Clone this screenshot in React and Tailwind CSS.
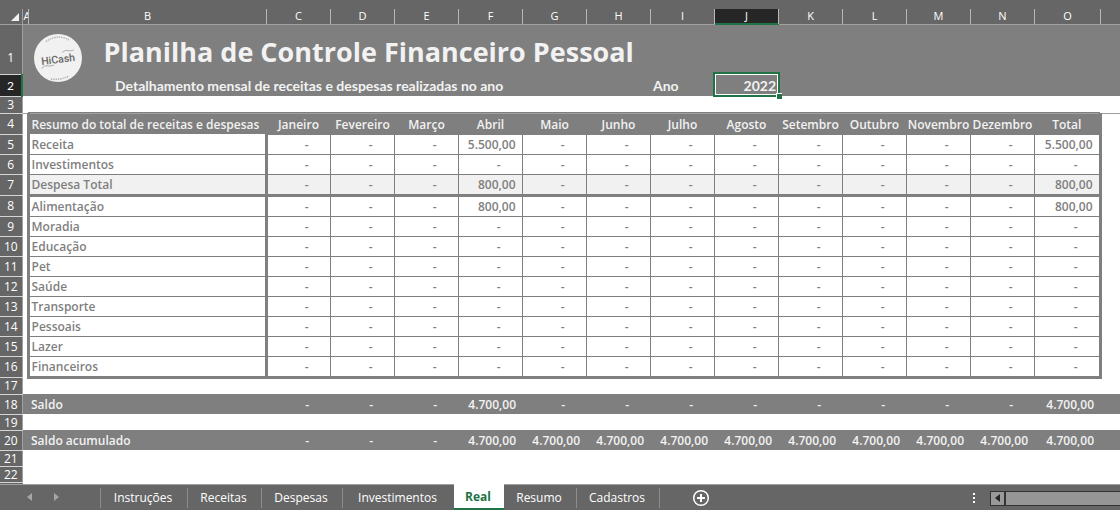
import React from "react";

const months = [
  "Janeiro", "Fevereiro", "Março", "Abril", "Maio", "Junho", "Julho",
  "Agosto", "Setembro", "Outubro", "Novembro", "Dezembro",
];
const headings = [...months, "Total"];
const letters = ["A", "B", "C", "D", "E", "F", "G", "H", "I", "J", "K", "L", "M", "N", "O"];

const empty = headings.map(() => "-");
const april = (value) => headings.map((_, i) => (i === 3 || i === 12 ? value : "-"));

const summary = [
  { n: 5, label: "Receita", values: april("5.500,00"), height: "h-5" },
  { n: 6, label: "Investimentos", values: empty, height: "h-5" },
  { n: 7, label: "Despesa Total", values: april("800,00"), height: "h-[21px]", shaded: true },
  { n: 8, label: "Alimentação", values: april("800,00"), height: "h-[21px]" },
  { n: 9, label: "Moradia", values: empty, height: "h-5" },
  { n: 10, label: "Educação", values: empty, height: "h-5" },
  { n: 11, label: "Pet", values: empty, height: "h-5" },
  { n: 12, label: "Saúde", values: empty, height: "h-5" },
  { n: 13, label: "Transporte", values: empty, height: "h-5" },
  { n: 14, label: "Pessoais", values: empty, height: "h-5" },
  { n: 15, label: "Lazer", values: empty, height: "h-5" },
  { n: 16, label: "Financeiros", values: empty, height: "h-[21px]", last: true },
];

const accumulated = headings.map((_, i) => (i < 3 ? "-" : "4.700,00"));

function RowNumber({ n, active }) {
  return (
    <th
      scope="row"
      className={
        "border-b border-b-[#d4d4d4] p-0 pt-px text-center align-middle text-xs leading-[14px] font-normal text-white " +
        (active
          ? "border-r-2 border-r-[#217346] bg-[#262626]"
          : "border-r border-r-[#a0a0a0] bg-[#666666]")
      }
    >
      {n}
    </th>
  );
}

function pad(value) {
  return value === "-" ? "pr-[21px]" : "pr-1.5";
}

function SummaryRow({ row }) {
  const bottom = row.shaded || row.last ? "border-b-3" : "border-b";
  const fill = row.shaded ? "bg-[#f1f1f1]" : "bg-white";
  return (
    <tr className={row.height}>
      <RowNumber n={row.n} />
      <td className="p-0" />
      <th
        scope="row"
        className={`border-x-3 border-[#7f7f7f] p-0 pt-0.5 pl-0.5 text-left leading-4 font-semibold ${bottom} ${fill}`}
      >
        {row.label}
      </th>
      {row.values.map((v, i) => (
        <td
          key={i}
          className={`border-[#7f7f7f] p-0 pt-0.5 text-right leading-4 font-semibold ${bottom} ${fill} ${
            i === 12 ? "border-r-3" : "border-r"
          } ${pad(v)}`}
        >
          {v}
        </td>
      ))}
      <td className="p-0" />
    </tr>
  );
}

function BalanceRow({ n, label, values }) {
  return (
    <tr className="h-5 bg-[#7f7f7f] text-[#f2f2f2]">
      <RowNumber n={n} />
      <td className="p-0" />
      <th scope="row" className="p-0 pt-0.5 pl-[3px] text-left leading-4 font-semibold">{label}</th>
      {values.map((v, i) => (
        <td key={i} className={`p-0 pt-0.5 text-right leading-4 font-semibold ${pad(v)}`}>{v}</td>
      ))}
      <td className="p-0" />
    </tr>
  );
}

function BlankRow({ n, height }) {
  return (
    <tr className={height}>
      <RowNumber n={n} />
      <td colSpan={16} className="p-0" />
    </tr>
  );
}

function Logo() {
  return (
    <svg viewBox="0 0 48 48" className="absolute top-[9px] left-[11px] size-12" role="img" aria-label="HiCash">
      <circle cx="24" cy="24" r="24" fill="#f1f1f1" />
      <path d="M12 7.5 Q24 -0.5 35 6" fill="none" stroke="#b4b4b4" strokeWidth="1.5" strokeDasharray="1.4 0.9" />
      <path d="M17 45 Q26 46.5 35 42" fill="none" stroke="#b4b4b4" strokeWidth="1.5" strokeDasharray="1.4 0.9" />
      <path d="M28 18.5 C33 14 36 19 40 15.5" fill="none" stroke="#999" strokeWidth="0.8" />
      <path d="M8 34.5 C11 29 14 34 20 31" fill="none" stroke="#999" strokeWidth="0.8" />
      <g transform="rotate(-7 24 25)">
        <text x="24" y="29" textAnchor="middle" fontFamily="Roboto, sans-serif" fontWeight="500" fontSize="10.5" fill="#666">
          HiCash
        </text>
      </g>
    </svg>
  );
}

const tabs = [
  { name: "Instruções", width: "w-[87px]" },
  { name: "Receitas", width: "w-[74px]" },
  { name: "Despesas", width: "w-[81px]" },
  { name: "Investimentos", width: "w-[111px]" },
  { name: "Real", width: "w-[50px]", active: true },
  { name: "Resumo", width: "w-[73px]" },
  { name: "Cadastros", width: "w-[83px]" },
];

function TabBar() {
  return (
    <nav className="flex h-[27px] items-start border-t border-[#a0a0a0] bg-[#666666] text-white">
      <div className="flex h-[25px] w-[100px] shrink-0 items-center gap-[22px] pl-[27px]">
        <button type="button" aria-label="Planilha anterior">
          <svg viewBox="0 0 5 8" className="h-2 w-[5px]" fill="#a6a6a6"><path d="M5 0v8L0 4z" /></svg>
        </button>
        <button type="button" aria-label="Próxima planilha">
          <svg viewBox="0 0 5 8" className="h-2 w-[5px]" fill="#a6a6a6"><path d="M0 0v8l5-4z" /></svg>
        </button>
      </div>
      <div className="my-[3px] h-5 w-px shrink-0 bg-[#8c8c8c]" />
      {tabs.map((t, i) =>
        t.active ? (
          <button
            key={t.name}
            type="button"
            aria-current="page"
            className={`-mt-px h-[26px] shrink-0 border-b-2 border-[#217346] bg-white pt-[3px] pr-0.5 text-xs leading-5 font-bold text-[#217346] ${t.width}`}
          >
            {t.name}
          </button>
        ) : (
          <button
            key={t.name}
            type="button"
            className={`my-[3px] h-5 shrink-0 pr-0.5 text-xs leading-5 ${
              i === 3 ? "" : "border-r border-[#8c8c8c]"
            } ${t.width}`}
          >
            {t.name}
          </button>
        )
      )}
      <button type="button" aria-label="Nova planilha" className="mt-1 ml-8 shrink-0">
        <svg viewBox="0 0 18 18" className="size-[18px]" fill="none" stroke="#fff">
          <circle cx="9" cy="9" r="7.3" strokeWidth="1.5" />
          <path d="M9 5v8M5 9h8" strokeWidth="2" />
        </svg>
      </button>
      <div className="mt-2 ml-auto flex w-[3px] shrink-0 flex-col gap-0.5">
        <span className="size-0.5 bg-white" />
        <span className="size-0.5 bg-white" />
        <span className="size-0.5 bg-white" />
      </div>
      <div className="mt-1.5 ml-[14px] flex h-[15px] w-[130px] shrink-0 border border-r-0 border-[#333] bg-[#999]">
        <button type="button" aria-label="Rolar para a esquerda" className="flex w-[14px] items-center justify-center border-r border-[#333]">
          <svg viewBox="0 0 5 8" className="h-2 w-[5px]" fill="#262626"><path d="M5 0v8L0 4z" /></svg>
        </button>
        <div className="flex-1 border-l border-[#333] bg-[#969696]" />
      </div>
    </nav>
  );
}

export default function App() {
  return (
    <div className="overflow-hidden bg-white font-['Open_Sans','Noto_Sans',sans-serif] text-xs text-[#7f7f7f]">
      <div className="h-[9px] bg-[#666666]" />
      <table className="w-full table-fixed border-collapse">
        <colgroup>
          <col className="w-[22px]" />
          <col className="w-1.5" />
          <col className="w-[238px]" />
          {months.map((m) => (
            <col key={m} className="w-16" />
          ))}
          <col className="w-[66px]" />
          <col />
        </colgroup>
        <thead>
          <tr className="h-[15px] bg-[#666666] text-white">
            <td className="border-r border-b border-[#a0a0a0] p-0">
              <svg viewBox="0 0 8 8" className="mt-0.5 ml-[11px] size-2" fill="#f1f1f1"><path d="M8 0v8H0z" /></svg>
            </td>
            {letters.map((l) => (
              <th
                key={l}
                scope="col"
                className={
                  "overflow-hidden border-r border-b border-r-[#b8b8b8] p-0 pl-px text-center text-[11px] leading-[14px] font-normal " +
                  (l === "J" ? "border-b-[#217346] bg-[#262626] shadow-[inset_0_-1px_0_#217346]" : "border-b-[#a0a0a0]")
                }
              >
                {l}
              </th>
            ))}
            <td className="border-b border-[#a0a0a0] p-0" />
          </tr>
        </thead>
        <tbody>
          <tr className="h-[50px] bg-[#7f7f7f]">
            <th scope="row" className="border-r border-b border-r-[#a0a0a0] border-b-[#d4d4d4] bg-[#666666] p-0 pt-[18px] text-center font-normal text-white">
              1
            </th>
            <td colSpan={16} className="relative p-0 pl-[81px]">
              <Logo />
              <h1 className="pt-1.5 text-[27px] leading-9 font-bold whitespace-nowrap text-[#f2f2f2]">
                Planilha de Controle Financeiro Pessoal
              </h1>
            </td>
          </tr>
          <tr className="h-[22px] bg-[#7f7f7f] font-[Lato,sans-serif] text-sm text-[#f2f2f2]">
            <RowNumber n={2} active />
            <td colSpan={8} className="p-0 pt-0.5 pl-[92px] leading-5 font-bold">
              Detalhamento mensal de receitas e despesas realizadas no ano
            </td>
            <td className="p-0 pt-0.5 pl-[3px] leading-5 font-bold">Ano</td>
            <td className="relative p-0 pt-0.5 pr-0.5 text-right leading-5 font-bold">
              2022
              <div className="absolute -top-0.5 -right-0.5 -bottom-px -left-px border-2 border-[#217346]">
                <div className="h-full border border-white" />
                <span className="absolute -right-1 -bottom-1 size-1.5 border-t border-l border-white bg-[#217346]" />
              </div>
            </td>
            <td colSpan={6} className="p-0" />
          </tr>
          <tr className="h-[17px]">
            <RowNumber n={3} />
            <td className="border-b border-[#a0a0a0] p-0" />
            <td colSpan={14} className="border-b border-[#a0a0a0] p-0 shadow-[inset_0_-1px_0_#7f7f7f]" />
            <td className="border-b border-[#a0a0a0] p-0" />
          </tr>
          <tr className="h-[21px]">
            <RowNumber n={4} />
            <td className="p-0" />
            <th scope="col" className="border-l-3 border-[#7f7f7f] bg-[#7f7f7f] p-0 pt-0.5 pl-0.5 text-left leading-4 font-semibold whitespace-nowrap text-[#f2f2f2]">
              Resumo do total de receitas e despesas
            </th>
            {headings.map((h, i) => (
              <th
                key={h}
                scope="col"
                className={
                  "border-b border-[#7f7f7f] bg-[#7f7f7f] p-0 pt-0.5 pl-px text-center leading-4 font-semibold text-[#f2f2f2] " +
                  (i === 12 ? "border-r-3" : "")
                }
              >
                {h}
              </th>
            ))}
            <td className="p-0" />
          </tr>
          {summary.map((row) => (
            <SummaryRow key={row.n} row={row} />
          ))}
          <BlankRow n={17} height="h-[17px]" />
          <BalanceRow n={18} label="Saldo" values={april("4.700,00")} />
          <BlankRow n={19} height="h-4" />
          <BalanceRow n={20} label="Saldo acumulado" values={accumulated} />
          <BlankRow n={21} height="h-4" />
          <BlankRow n={22} height="h-4" />
        </tbody>
      </table>
      <div className="h-px w-[23px] bg-[#666666]" />
      <TabBar />
    </div>
  );
}
